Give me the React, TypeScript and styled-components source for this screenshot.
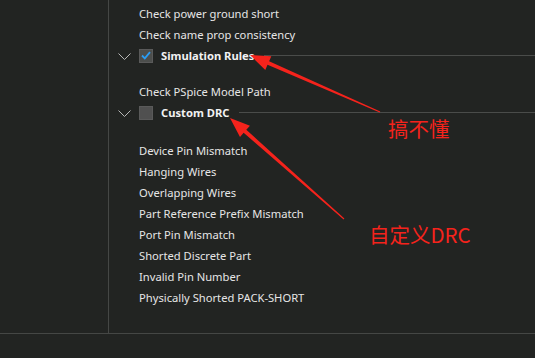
import React from "react";
import styled, { createGlobalStyle } from "styled-components";

const Global = createGlobalStyle`
  html, body { margin: 0; padding: 0; background: #222422; }
  body { font-family: "Noto Sans", "Open Sans", sans-serif; }
`;

const Page = styled.div`
  position: relative;
  width: 535px;
  height: 358px;
  background: #222422;
  display: flex;
  flex-direction: column;
  overflow: hidden;
`;

const Main = styled.div`
  height: 333px;
  display: flex;
  border-bottom: 1px solid #454745;
`;

const Sidebar = styled.div`
  width: 108px;
  border-right: 1px solid #454745;
`;

const Content = styled.div`
  flex: 1;
  padding-top: 3px;
  display: flex;
  flex-direction: column;
`;

const Item = styled.div`
  height: 21px;
  line-height: 21px;
  padding-left: 30px;
  font-size: 11.2px;
  color: #e6e6e6;
  white-space: nowrap;
`;

const Header = styled.div`
  height: 21px;
  display: flex;
  align-items: center;
  padding-left: 9px;
`;

const Chevron = styled.svg`
  width: 13px;
  height: 8px;
  margin-right: 8px;
  margin-top: 3px;
`;

const Box = styled.div<{ $checked?: boolean }>`
  width: 14px;
  height: 14px;
  box-sizing: border-box;
  background: ${(p) => (p.$checked ? "#4c4e4c" : "#505050")};
  border: 1px solid #5a5a5a;
  display: flex;
  align-items: center;
  justify-content: center;
  margin-right: 8px;
`;

const HeaderText = styled.span`
  font-size: 11.2px;
  font-weight: 700;
  color: #f2f2f2;
  white-space: nowrap;
`;

const Rule = styled.div`
  flex: 1;
  height: 1px;
  background: #4a4c4a;
  margin-left: 10px;
`;

const Group = styled.div<{ $top: number }>`
  padding-top: ${(p) => p.$top}px;
  display: flex;
  flex-direction: column;
`;

const Overlay = styled.svg`
  position: absolute;
  left: 0;
  top: 0;
  width: 535px;
  height: 358px;
  pointer-events: none;
`;

const Note = styled.div<{ $x: number; $y: number }>`
  position: absolute;
  left: ${(p) => p.$x}px;
  top: ${(p) => p.$y}px;
  color: #f5231c;
  font-size: 20.5px;
  font-family: "Noto Sans CJK SC", "Noto Sans", sans-serif;
  line-height: 1;
  white-space: nowrap;
`;

function SectionHeader({ label, checked }: { label: string; checked?: boolean }) {
  return (
    <Header>
      <Chevron viewBox="0 0 13 8">
        <path d="M0.5 0.5 L6.5 6.5 L12.5 0.5" fill="none" stroke="#b8b8b8" strokeWidth="1" />
      </Chevron>
      <Box $checked={checked}>
        {checked && (
          <svg width="10" height="9" viewBox="0 0 10 9">
            <path d="M1 4.5 L3.8 7.3 L9 1.2" fill="none" stroke="#2a9df4" strokeWidth="1.8" />
          </svg>
        )}
      </Box>
      <HeaderText>{label}</HeaderText>
      <Rule />
    </Header>
  );
}

function Arrow({ tx, ty, sx, sy }: { tx: number; ty: number; sx: number; sy: number }) {
  const dx = sx - tx;
  const dy = sy - ty;
  const len = Math.hypot(dx, dy);
  const ux = dx / len;
  const uy = dy / len;
  const px = -uy;
  const py = ux;
  const headLen = 20;
  const headW = 7.5;
  const shaftW = 4;
  const bx = tx + ux * headLen;
  const by = ty + uy * headLen;
  const pts = [
    [tx, ty],
    [bx + px * headW, by + py * headW],
    [bx + px * shaftW * 0.5, by + py * shaftW * 0.5],
    [sx + px * 0.6, sy + py * 0.6],
    [sx - px * 0.6, sy - py * 0.6],
    [bx - px * shaftW * 0.5, by - py * shaftW * 0.5],
    [bx - px * headW, by - py * headW],
  ]
    .map((p) => p.join(","))
    .join(" ");
  return <polygon points={pts} fill="#f5231c" />;
}

const customItems = [
  "Device Pin Mismatch",
  "Hanging Wires",
  "Overlapping Wires",
  "Part Reference Prefix Mismatch",
  "Port Pin Mismatch",
  "Shorted Discrete Part",
  "Invalid Pin Number",
  "Physically Shorted PACK-SHORT",
];

export default function App() {
  return (
    <>
      <Global />
      <Page>
        <Main>
          <Sidebar />
          <Content>
            <Item>Check power ground short</Item>
            <Item>Check name prop consistency</Item>
            <SectionHeader label="Simulation Rules" checked />
            <Group $top={15}>
              <Item>Check PSpice Model Path</Item>
            </Group>
            <SectionHeader label="Custom DRC" />
            <Group $top={17}>
              {customItems.map((t) => (
                <Item key={t}>{t}</Item>
              ))}
            </Group>
          </Content>
        </Main>
        <Overlay viewBox="0 0 535 358">
          <Arrow tx={250} ty={55} sx={380} sy={112} />
          <Arrow tx={230} ty={118} sx={344} sy={219} />
        </Overlay>
        <Note $x={388} $y={118}>搞不懂</Note>
        <Note $x={369} $y={224}>自定义DRC</Note>
      </Page>
    </>
  );
}
